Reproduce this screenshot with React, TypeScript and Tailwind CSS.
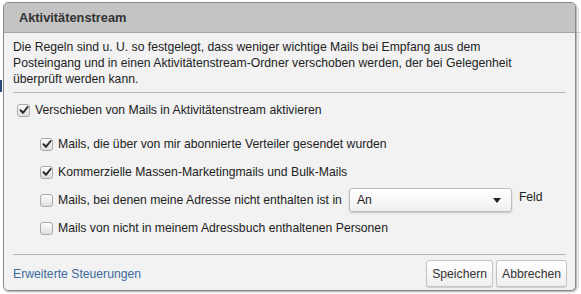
import React from 'react';

const Box = ({ checked }: { checked?: boolean }) => (
    <span className="relative inline-flex w-[13px] h-[13px] shrink-0 rounded-[3px] border border-[#aaaaaa] bg-gradient-to-b from-[#fdfdfd] to-[#dedede] items-center justify-center">
        {checked && (
            <svg width="10" height="10" viewBox="0 0 10 10" className="block">
                <path d="M1.5 5.2 L4 7.8 L8.6 2" fill="none" stroke="#2d2d2d" strokeWidth="2" strokeLinecap="round" strokeLinejoin="round" />
            </svg>
        )}
    </span>
);

const Row = ({ checked, children }: { checked?: boolean; children: React.ReactNode }) => (
    <div className="flex items-center h-[28px] gap-[5px]">
        <Box checked={checked} />
        {children}
    </div>
);

export default function App() {
    return (
        <div className="relative w-[581px] h-[294px] bg-white overflow-hidden" style={{ fontFamily: '"Liberation Sans", Arial, sans-serif' }}>
            {/* page behind the dialog */}
            <div className="absolute left-0 top-[80px] w-[2px] h-[12px] bg-[#2a4a7a]" />
            <div className="absolute left-[576px] top-[32px] w-[5px] h-[1px] bg-[#cfcfcf]" />
            <div className="absolute left-[578px] top-[8px] w-[1px] h-[280px] bg-[#e4e4e4]" />

            <div className="absolute left-[3px] top-[2px] w-[573px] h-[289px] flex flex-col rounded-[5px] border border-[#8a8a8a] bg-[#f2f2f2] overflow-hidden shadow-[1px_1px_2px_rgba(0,0,0,0.35)]">
                <div className="h-[30px] shrink-0 flex items-center pl-[15px] bg-[#c4c4c4] border-b border-[#a3a3a3] text-[12.8px] leading-[16px] font-bold text-[#333333]">
                    Aktivitätenstream
                </div>

                <div className="flex-1 flex flex-col px-[9px] text-[12.2px] leading-[16px] text-[#222222]">
                    <p className="pt-[6px] text-[12.2px] leading-[16px]">
                        Die Regeln sind u. U. so festgelegt, dass weniger wichtige Mails bei Empfang aus dem
                        <br />
                        Posteingang und in einen Aktivitätenstream-Ordner verschoben werden, der bei Gelegenheit
                        <br />
                        überprüft werden kann.
                    </p>
                    <div className="mt-[5px] h-px shrink-0 bg-[#b4b4b4]" />

                    <div className="pl-[4px] pt-[3px]">
                        <Row checked>Verschieben von Mails in Aktivitätenstream aktivieren</Row>
                    </div>

                    <div className="pl-[27px] pt-[6px] flex flex-col">
                        <Row checked>Mails, die über von mir abonnierte Verteiler gesendet wurden</Row>
                        <Row checked>Kommerzielle Massen-Marketingmails und Bulk-Mails</Row>
                        <Row>
                            <span>Mails, bei denen meine Adresse nicht enthalten ist in</span>
                            <div className="ml-[2px] w-[163px] h-[24px] flex items-center justify-between pl-[7px] pr-[10px] rounded-[3px] border border-[#bdbdbd] bg-gradient-to-b from-white to-[#f0f0f0] shadow-[0_1px_2px_rgba(0,0,0,0.2)]">
                                <span>An</span>
                                <svg width="8" height="5" viewBox="0 0 8 5">
                                    <path d="M0 0 H8 L4 5 Z" fill="#222" />
                                </svg>
                            </div>
                            <span className="ml-[2px] self-start pt-[3px]">Feld</span>
                        </Row>
                        <Row>Mails von nicht in meinem Adressbuch enthaltenen Personen</Row>
                    </div>

                    <div className="mt-[12px] h-px shrink-0 bg-[#b4b4b4]" />

                    <div className="flex items-center justify-between pt-[5px]">
                        <span className="text-[#3d6a9b] pt-[1px]">Erweiterte Steuerungen</span>
                        <div className="flex gap-[3px] -mr-[1px]">
                            <button className="h-[27px] px-[5px] rounded-[3px] border border-[#c4c4c4] bg-gradient-to-b from-white to-[#efefef] text-[12.2px] text-[#333] shadow-[0_1px_1px_rgba(0,0,0,0.15)]">Speichern</button>
                            <button className="h-[27px] px-[5px] rounded-[3px] border border-[#c4c4c4] bg-gradient-to-b from-white to-[#efefef] text-[12.2px] text-[#333] shadow-[0_1px_1px_rgba(0,0,0,0.15)]">Abbrechen</button>
                        </div>
                    </div>
                </div>
            </div>
        </div>
    );
}
